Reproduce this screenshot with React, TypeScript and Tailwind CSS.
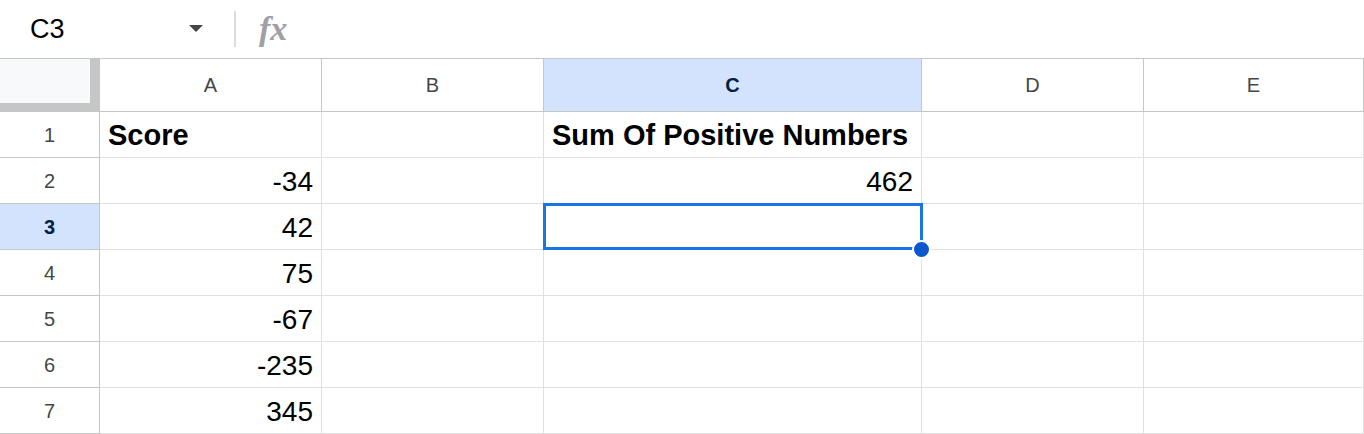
const font = { fontFamily: '"Liberation Sans", Arial, sans-serif' };

const columns = ["A", "B", "C", "D", "E"];
const colWidths = ["w-[222px]", "w-[222px]", "w-[378px]", "w-[222px]", "flex-1"];

type Cell = { text: string; bold?: boolean; right?: boolean };

const rows: Cell[][] = [
  [{ text: "Score", bold: true }, { text: "" }, { text: "Sum Of Positive Numbers", bold: true }, { text: "" }, { text: "" }],
  [{ text: "-34", right: true }, { text: "" }, { text: "462", right: true }, { text: "" }, { text: "" }],
  [{ text: "42", right: true }, { text: "" }, { text: "" }, { text: "" }, { text: "" }],
  [{ text: "75", right: true }, { text: "" }, { text: "" }, { text: "" }, { text: "" }],
  [{ text: "-67", right: true }, { text: "" }, { text: "" }, { text: "" }, { text: "" }],
  [{ text: "-235", right: true }, { text: "" }, { text: "" }, { text: "" }, { text: "" }],
  [{ text: "345", right: true }, { text: "" }, { text: "" }, { text: "" }, { text: "" }],
];

const selectedCol = 2;
const selectedRow = 2;

export default function App() {
  return (
    <div className="h-[434px] w-[1364px] overflow-hidden bg-white text-black" style={font}>
      {/* formula bar */}
      <div className="flex h-[59px] items-center border-b border-[#c4c7c5]">
        <div className="flex w-[234px] items-center pl-[30px] pr-[31px]">
          <span className="flex-1 text-[27px] leading-none">C3</span>
          <svg width="14" height="8" viewBox="0 0 14 8">
            <path d="M0 0 L14 0 L7 7 Z" fill="#444746" />
          </svg>
        </div>
        <div className="h-[36px] w-[2px] bg-[#dadce0]" />
        <span
          className="ml-[23px] text-[34px] italic font-bold leading-none text-[#9ea0a3]"
          style={{ fontFamily: '"Liberation Serif", "Times New Roman", serif' }}
        >
          fx
        </span>
      </div>

      {/* column headers */}
      <div className="flex h-[53px]">
        <div className="w-[100px] shrink-0 bg-[#c4c7c5]">
          <div className="h-[44px] w-[90px] bg-[#f8f9fa]" />
        </div>
        {columns.map((c, i) => (
          <div
            key={c}
            className={`${colWidths[i]} flex shrink-0 items-center justify-center border-b border-r border-[#c4c7c5] text-[20px] ${
              i === selectedCol ? "bg-[#d3e3fd] font-bold text-[#041e49]" : "text-[#444746]"
            }`}
          >
            {c}
          </div>
        ))}
      </div>

      {/* rows */}
      {rows.map((row, r) => (
        <div key={r} className="flex h-[46px]">
          <div
            className={`flex w-[100px] shrink-0 items-center justify-center border-b border-r border-[#c4c7c5] text-[20px] ${
              r === selectedRow ? "bg-[#d3e3fd] font-bold text-[#041e49]" : "text-[#444746]"
            }`}
          >
            {r + 1}
          </div>
          {row.map((cell, i) => (
            <div
              key={i}
              className={`${colWidths[i]} relative flex shrink-0 items-center border-b border-r border-[#e1e1e1] px-[8px] pt-[2px] ${
                cell.right ? "justify-end pr-[8px]" : ""
              } ${cell.bold ? "text-[29px] font-bold" : "text-[28px]"}`}
            >
              {cell.text}
              {r === selectedRow && i === selectedCol ? (
                <>
                  <div className="absolute -left-px -top-px z-10 h-[calc(100%+2px)] w-[calc(100%+3px)] border-[3px] border-[#1a73e8]" />
                  <div className="absolute -bottom-[10px] -right-[10px] z-20 h-[19px] w-[19px] rounded-full border-2 border-white bg-[#0b57d0]" />
                </>
              ) : null}
            </div>
          ))}
        </div>
      ))}
    </div>
  );
}
